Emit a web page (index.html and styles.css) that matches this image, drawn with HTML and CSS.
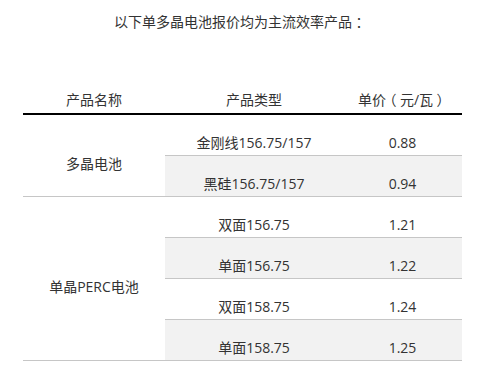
FILE: index.html
```html
<!DOCTYPE html>
<html lang="zh">
<head>
<meta charset="utf-8">
<link rel="stylesheet" href="styles.css">
</head>
<body>
<p class="title">以下单多晶电池报价均为主流效率产品<span class="punct">：</span></p>
<table class="price">
  <colgroup>
    <col class="c1"><col class="c2"><col class="c3">
  </colgroup>
  <thead>
    <tr><th>产品名称</th><th>产品类型</th><th>单价<span class="punct">（</span>元/瓦<span class="punct">）</span></th></tr>
  </thead>
  <tbody>
    <tr><td class="name" rowspan="2">多晶电池</td><td>金刚线156.75/157</td><td>0.88</td></tr>
    <tr class="alt"><td>黑硅156.75/157</td><td>0.94</td></tr>
    <tr><td class="name" rowspan="4">单晶PERC电池</td><td>双面156.75</td><td>1.21</td></tr>
    <tr class="alt"><td>单面156.75</td><td>1.22</td></tr>
    <tr><td>双面158.75</td><td>1.24</td></tr>
    <tr class="alt"><td>单面158.75</td><td>1.25</td></tr>
  </tbody>
</table>
</body>
</html>
```
FILE: styles.css
```css
html, body {
  margin: 0;
  padding: 0;
  background: #fff;
}
body {
  font-family: "Open Sans", "Noto Sans CJK SC", sans-serif;
  font-size: 14px;
  color: #333;
  text-spacing-trim: space-all;
}
.punct {
  font-feature-settings: "halt" 1;
  padding: 0 3.5px;
}
.title {
  margin: 0;
  padding-top: 12px;
  line-height: 20px;
  text-align: center;
}
.price {
  margin: 56px 0 0 23px;
  width: 439px;
  border-collapse: separate;
  border-spacing: 0;
  table-layout: fixed;
}
.c1 { width: 142px; }
.c2 { width: 178px; }
.c3 { width: 119px; }
.price th {
  font-weight: normal;
  line-height: 24px;
  padding: 0 0 1px;
  text-align: center;
  border-bottom: 2px solid #000;
}
.price td {
  line-height: 24px;
  padding: 16px 0 0;
  text-align: center;
  vertical-align: top;
  border-bottom: 1px solid #c6c6c6;
}
.price td.name {
  vertical-align: middle;
  background: #fff;
}
.price tr.alt td {
  background: #f2f2f2;
}
```
